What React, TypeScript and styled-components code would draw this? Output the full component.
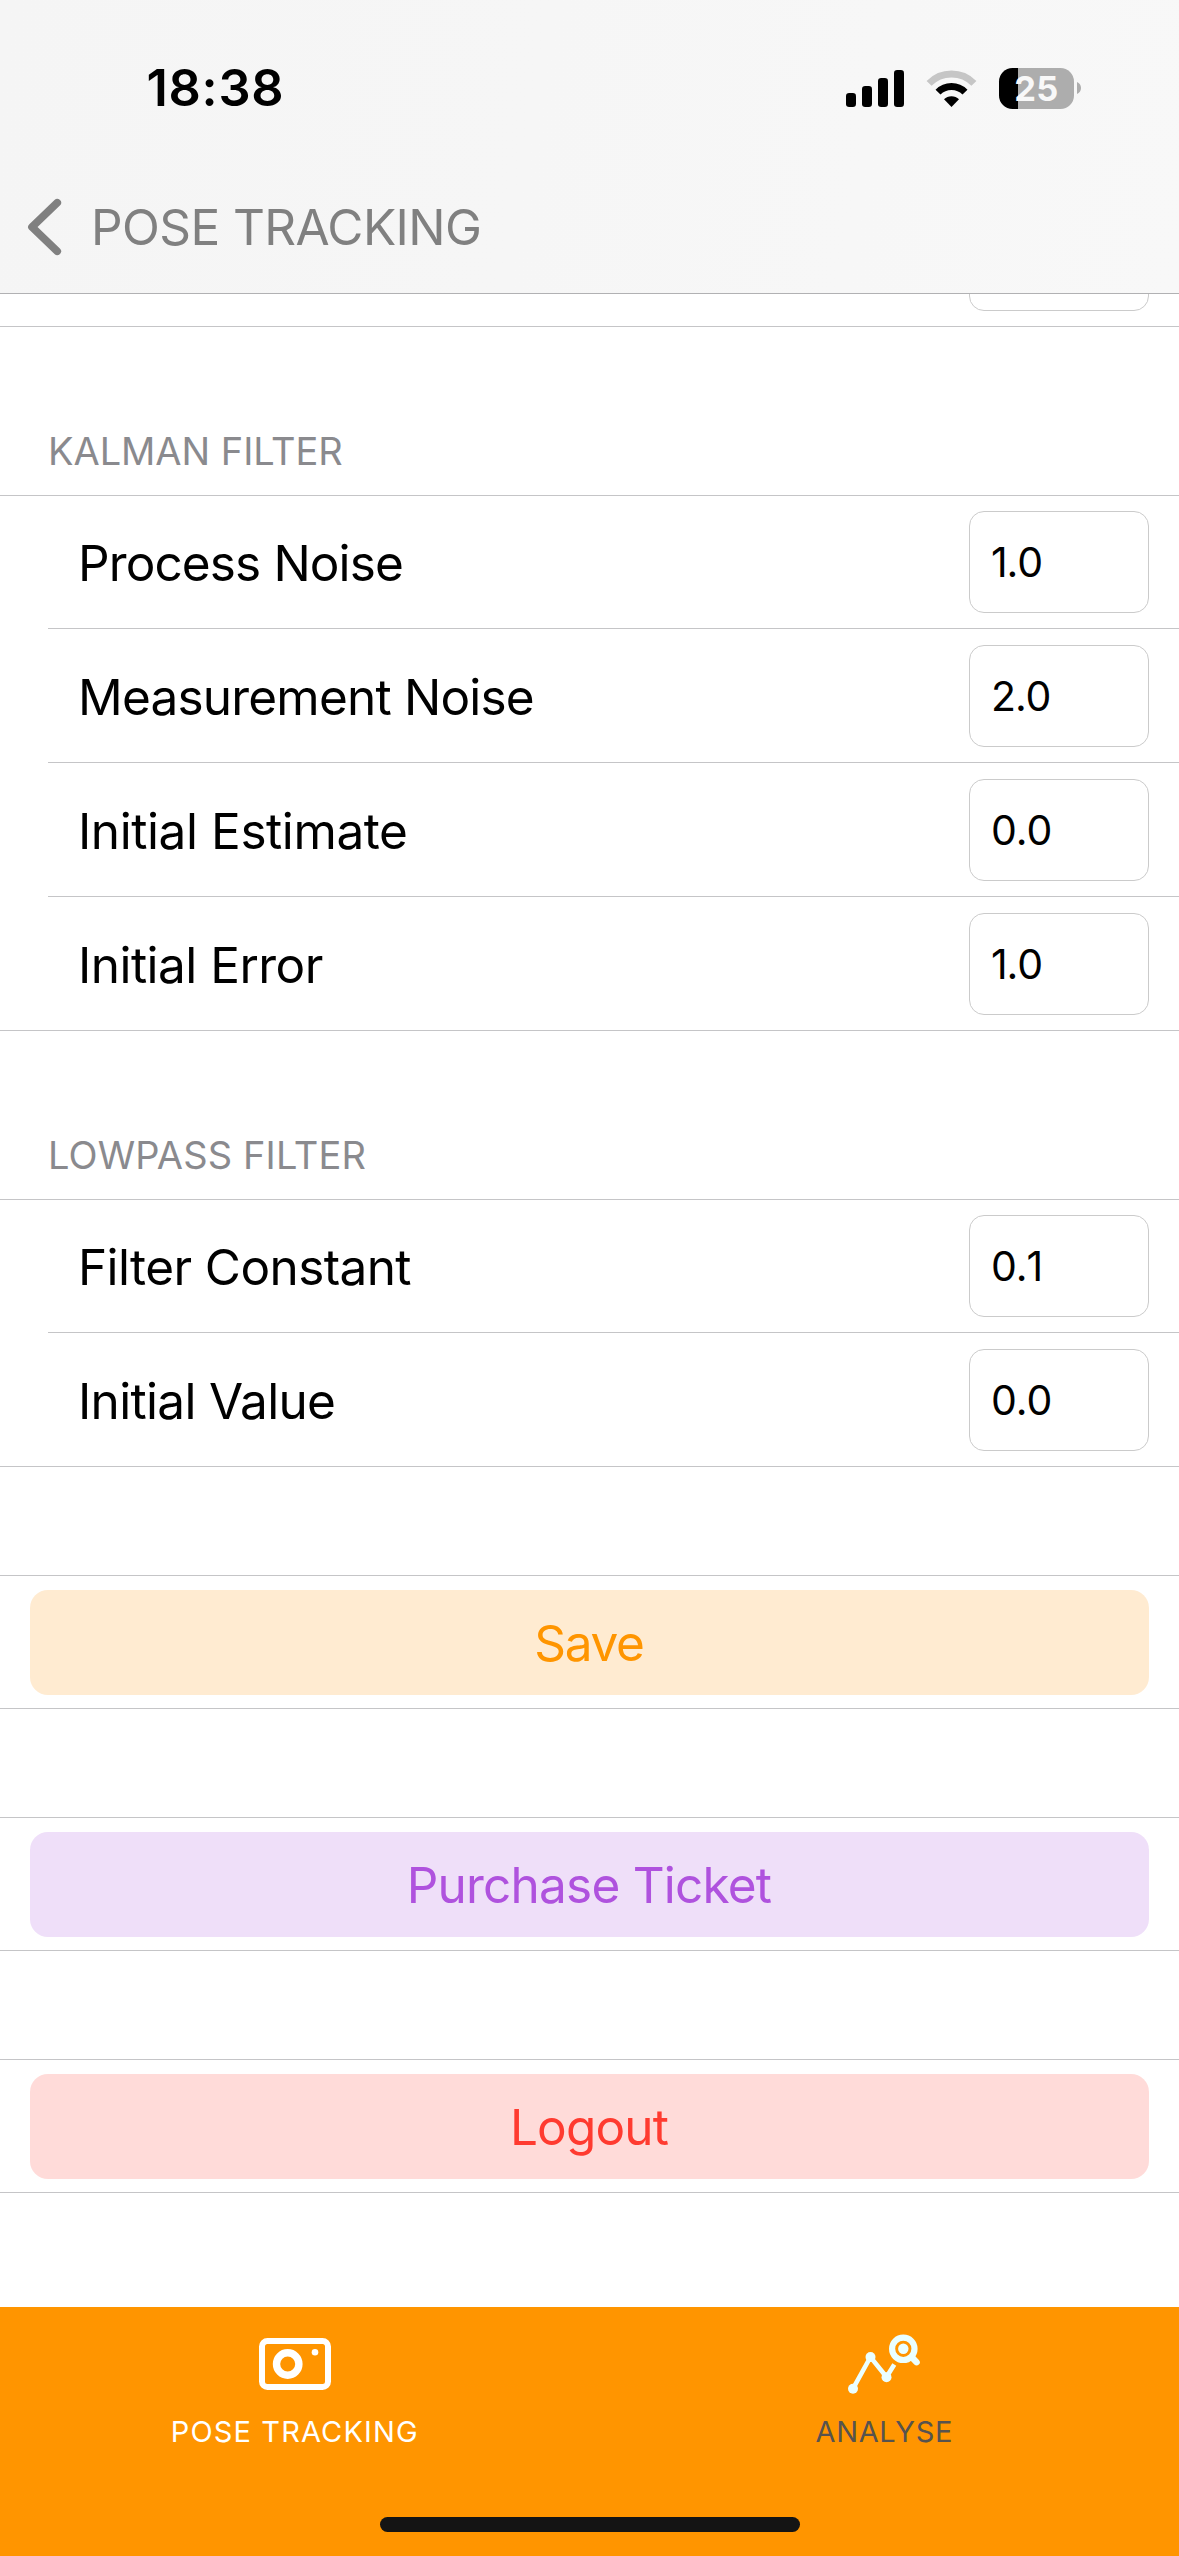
import React from "react";
import styled, { createGlobalStyle } from "styled-components";

const GlobalStyle = createGlobalStyle`
  *, *::before, *::after { box-sizing: border-box; }
  body {
    margin: 0;
    background: #fff;
    color: #000;
    font-family: Inter, "Liberation Sans", sans-serif;
  }
`;

const LINE = "#c5c5c7";
const ORANGE = "#ff9500";

const Screen = styled.div`
  width: 1179px;
  height: 2556px;
  display: flex;
  flex-direction: column;
  overflow: hidden;
  background: #fff;
`;

const Header = styled.header`
  height: 294px;
  flex: none;
  background: linear-gradient(100deg, #f5f5f5 0%, #f6f6f6 45%, #f8f8f8 100%);
  border-bottom: 1px solid #b1b1b3;
`;

const StatusBar = styled.div`
  height: 176px;
  display: flex;
  align-items: center;
  justify-content: space-between;
  padding: 0 98px 0 146.5px;
`;

const Clock = styled.span`
  font-size: 50.5px;
  line-height: 60px;
  font-weight: 600;
  letter-spacing: 0.7px;
`;

const StatusIcons = styled.div`
  display: flex;
  align-items: center;
`;

const SignalIcon = styled.svg`
  display: block;
  margin-right: 22px;
`;

const WifiIcon = styled.svg`
  display: block;
  margin-right: 22px;
`;

const Battery = styled.div`
  width: 75px;
  height: 41px;
  display: flex;
  align-items: center;
  justify-content: center;
  border-radius: 13.5px;
  background: linear-gradient(to right, #000 19px, #adadad 19px);
  color: #f8f8f8;
  font-size: 34.5px;
  line-height: 41px;
  font-weight: 700;
  letter-spacing: 0.3px;
`;

const BatteryCap = styled.svg`
  display: block;
  margin-left: 3px;
`;

const NavBar = styled.nav`
  height: 102px;
  display: flex;
  align-items: center;
  padding-left: 27px;
  color: #808080;
`;

const NavTitle = styled.h1`
  margin: 0 0 0 29px;
  font-size: 49.5px;
  line-height: 60px;
  font-weight: 400;
  letter-spacing: -0.6px;
`;

const Content = styled.main`
  flex: 1;
  min-height: 0;
  overflow: hidden;
`;

const ClippedRow = styled.div`
  height: 33px;
  display: flex;
  align-items: flex-end;
  justify-content: flex-end;
  overflow: hidden;
  padding: 0 30px 15px 0;
  border-bottom: 1px solid ${LINE};
`;

const SectionTitle = styled.h2<{ $tracking: number }>`
  height: 168px;
  margin: 0;
  padding: 100px 0 0 48px;
  color: #8a8a8e;
  font-size: 38px;
  line-height: 48px;
  font-weight: 400;
  letter-spacing: ${(p) => p.$tracking}px;
`;

const List = styled.section`
  border-top: 1px solid ${LINE};
  border-bottom: 1px solid ${LINE};
`;

const Row = styled.div`
  height: 134px;
  display: flex;
  align-items: flex-end;
  justify-content: space-between;
  margin-left: 48px;
  padding: 0 30px 15px 30px;
  border-bottom: 1px solid ${LINE};

  &:first-child {
    height: 133px;
  }

  &:last-child {
    height: 133px;
    border-bottom: 0;
  }
`;

const RowLabel = styled.label<{ $tracking: number }>`
  margin-bottom: -1px;
  font-size: 49.5px;
  line-height: 102px;
  letter-spacing: ${(p) => p.$tracking}px;
`;

const NumberField = styled.input`
  width: 180px;
  height: 102px;
  flex: none;
  padding: 0 20px 0 21px;
  border: 1px solid #cbcbcb;
  border-radius: 15px;
  background: #fff;
  color: #000;
  font-family: inherit;
  font-size: 41px;
  font-kerning: none;
  letter-spacing: -1.1px;
  outline: none;
`;

const ActionRow = styled.section`
  height: 134px;
  margin-top: 108px;
  padding: 14px 30px 13px;
  border-top: 1px solid ${LINE};
  border-bottom: 1px solid ${LINE};
`;

const ActionButton = styled.button<{ $color: string; $fill: string; $tracking: number }>`
  width: 100%;
  height: 105px;
  display: flex;
  align-items: center;
  justify-content: center;
  padding: 0 1px 0 0;
  border: 0;
  border-radius: 18px;
  background: ${(p) => p.$fill};
  color: ${(p) => p.$color};
  font-family: inherit;
  font-size: 49.5px;
  line-height: 60px;
  letter-spacing: ${(p) => p.$tracking}px;
`;

const TabBar = styled.footer`
  height: 249px;
  flex: none;
  display: flex;
  flex-direction: column;
  align-items: center;
  background: ${ORANGE};
`;

const Tabs = styled.div`
  width: 100%;
  height: 210px;
  display: flex;
`;

const Tab = styled.a<{ $color: string; $tracking: number }>`
  flex: 1;
  display: flex;
  flex-direction: column;
  align-items: center;
  padding-top: 25px;
  color: ${(p) => p.$color};
  font-size: 29px;
  line-height: 35px;
  letter-spacing: ${(p) => p.$tracking}px;
`;

const TabIcon = styled.svg`
  display: block;
  margin-bottom: 16px;
`;

const HomeIndicator = styled.div`
  width: 420px;
  height: 15px;
  border-radius: 8px;
  background: #141414;
`;

type Field = { label: string; value: string; tracking: number };

const kalman: Field[] = [
  { label: "Process Noise", value: "1.0", tracking: -0.88 },
  { label: "Measurement Noise", value: "2.0", tracking: -0.8 },
  { label: "Initial Estimate", value: "0.0", tracking: -0.42 },
  { label: "Initial Error", value: "1.0", tracking: -0.53 },
];

const lowpass: Field[] = [
  { label: "Filter Constant", value: "0.1", tracking: -0.6 },
  { label: "Initial Value", value: "0.0", tracking: -0.67 },
];

const actions = [
  { label: "Save", color: ORANGE, fill: "#ffebd1", tracking: -1.3 },
  { label: "Purchase Ticket", color: "#af52de", fill: "#efdff9", tracking: -0.78 },
  { label: "Logout", color: "#ff3b30", fill: "#ffdbd9", tracking: -0.85 },
];

function FieldList({ fields }: { fields: Field[] }) {
  return (
    <List>
      {fields.map((f) => (
        <Row key={f.label}>
          <RowLabel $tracking={f.tracking}>{f.label}</RowLabel>
          <NumberField defaultValue={f.value} />
        </Row>
      ))}
    </List>
  );
}

export default function App() {
  return (
    <>
      <GlobalStyle />
      <Screen>
        <Header>
          <StatusBar>
            <Clock>18:38</Clock>
            <StatusIcons>
              <SignalIcon width="58" height="37" viewBox="0 0 58 37">
                <rect x="0" y="23" width="10" height="14" rx="3.2" />
                <rect x="16" y="16" width="10" height="21" rx="3.2" />
                <rect x="32" y="8" width="10" height="29" rx="3.2" />
                <rect x="48" y="0" width="10" height="37" rx="3.2" />
              </SignalIcon>
              <WifiIcon width="51" height="37" viewBox="0 0 51 37" fill="none">
                <path d="M3.1 13.4 A31.5 31.5 0 0 1 47.9 13.4" stroke="#c6c6c6" strokeWidth="7" />
                <path d="M12 22.1 A19 19 0 0 1 39 22.1" stroke="#000" strokeWidth="7" />
                <path d="M25.5 37 L18 29.3 A10.6 10.6 0 0 1 33 29.3 Z" fill="#000" />
              </WifiIcon>
              <Battery>25</Battery>
              <BatteryCap width="4" height="12" viewBox="0 0 4 12">
                <path d="M0 0 C2.4 0.9 4 3.2 4 6 S2.4 11.1 0 12 Z" fill="#adadad" />
              </BatteryCap>
            </StatusIcons>
          </StatusBar>
          <NavBar>
            <svg width="35" height="58" viewBox="0 0 35 58" fill="none">
              <path
                d="M30.2 4.8 L5 29 L30.2 53.2"
                stroke="#808080"
                strokeWidth="7.8"
                strokeLinecap="round"
                strokeLinejoin="round"
              />
            </svg>
            <NavTitle>POSE TRACKING</NavTitle>
          </NavBar>
        </Header>

        <Content>
          <ClippedRow>
            <NumberField />
          </ClippedRow>
          <SectionTitle $tracking={-0.05}>KALMAN FILTER</SectionTitle>
          <FieldList fields={kalman} />
          <SectionTitle $tracking={0.12}>LOWPASS FILTER</SectionTitle>
          <FieldList fields={lowpass} />
          {actions.map((a) => (
            <ActionRow key={a.label}>
              <ActionButton $color={a.color} $fill={a.fill} $tracking={a.tracking}>
                {a.label}
              </ActionButton>
            </ActionRow>
          ))}
        </Content>

        <TabBar>
          <Tabs>
            <Tab $color="#ffffff" $tracking={1.13}>
              <TabIcon width="72" height="66" viewBox="0 0 72 66" fill="none">
                <rect x="3" y="9" width="66" height="46" rx="5.5" stroke="#fff" strokeWidth="6" />
                <circle cx="28.7" cy="32" r="11.2" stroke="#fff" strokeWidth="7.4" />
                <circle cx="56" cy="20.3" r="3.3" fill="#fff" />
              </TabIcon>
              POSE TRACKING
            </Tab>
            <Tab $color="#57534e" $tracking={0.65}>
              <TabIcon
                width="72"
                height="66"
                viewBox="848 2332 72 66"
                fill="none"
                stroke="#eaffff"
                strokeLinecap="round"
              >
                <path d="M853 2388.7 L870.5 2357 L886.5 2377 L894.3 2364.5" strokeWidth="4.6" strokeLinecap="butt" />
                <g fill="#eaffff" stroke="none">
                  <circle cx="853" cy="2388.7" r="5" />
                  <circle cx="870.5" cy="2357" r="5" />
                  <circle cx="886.5" cy="2377.2" r="5" />
                  <circle cx="903.3" cy="2348.8" r="5.2" />
                </g>
                <circle cx="903.3" cy="2348.8" r="11.2" strokeWidth="6.2" />
                <path d="M913 2358.5 L916.6 2362.2" strokeWidth="6.4" />
              </TabIcon>
              ANALYSE
            </Tab>
          </Tabs>
          <HomeIndicator />
        </TabBar>
      </Screen>
    </>
  );
}
